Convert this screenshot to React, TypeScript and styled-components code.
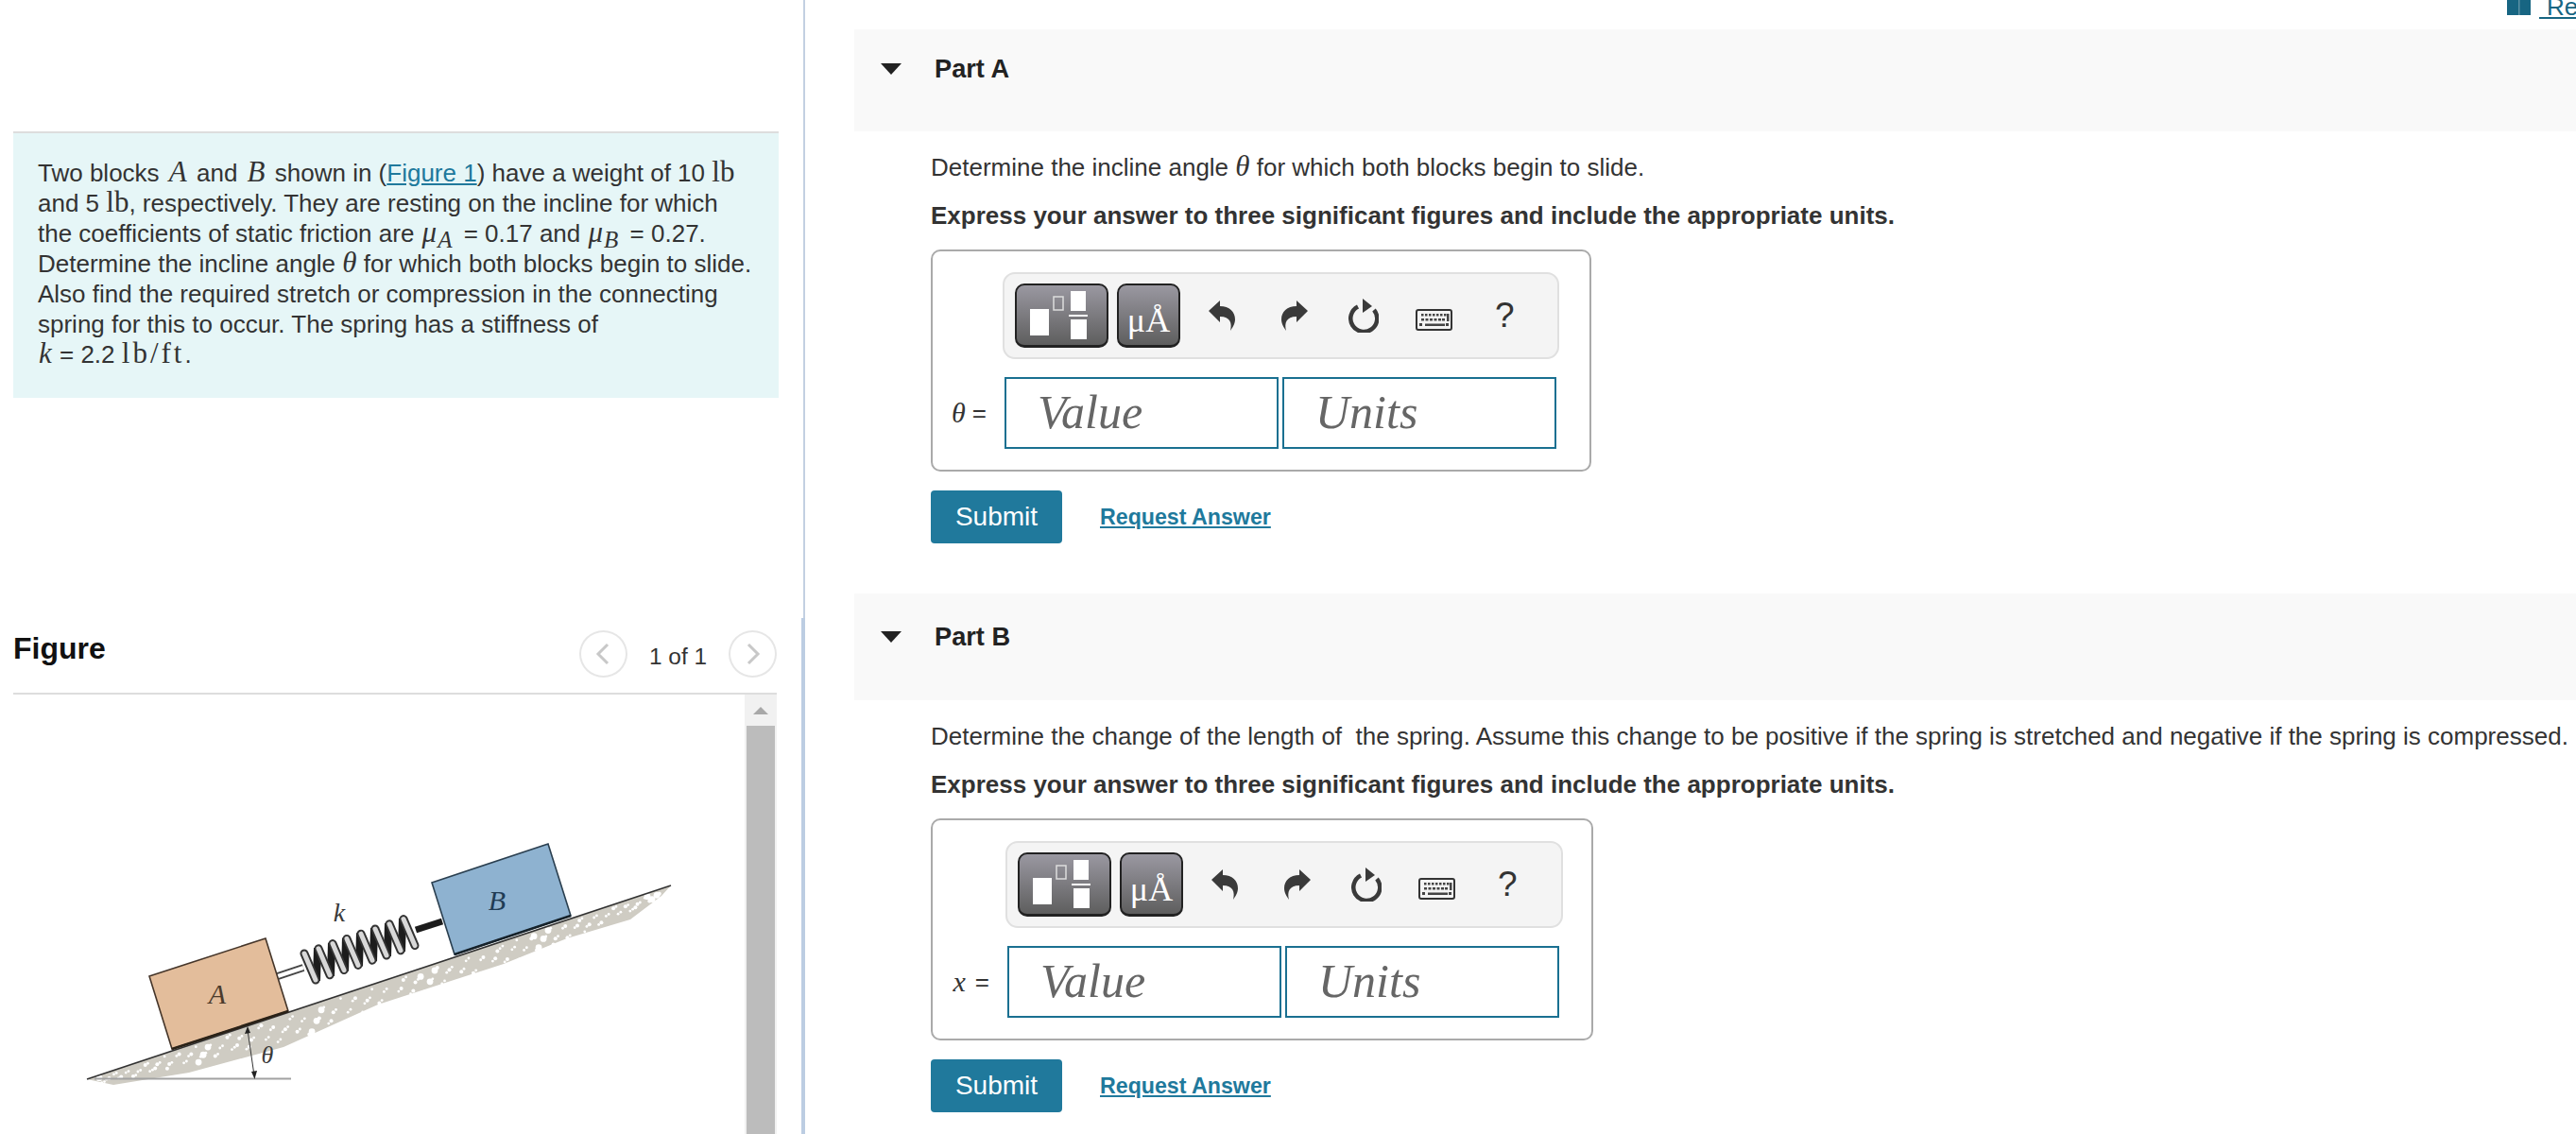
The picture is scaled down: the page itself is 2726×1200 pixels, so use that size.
import type { ReactNode } from "react";
import styled, { createGlobalStyle } from "styled-components";

const teal = "#20799c";
const bodyText = "#333333";

const GlobalStyle = createGlobalStyle`
  html, body {
    margin: 0;
    padding: 0;
    background: #ffffff;
    color: ${bodyText};
    font-family: "Liberation Sans", Arial, sans-serif;
    font-size: 26px;
  }
  * { box-sizing: border-box; }
`;

const Page = styled.div`
  display: flex;
  width: 2726px;
  height: 1200px;
  overflow: hidden;
`;

const LeftColumn = styled.aside`
  width: 848px;
  flex: none;
  padding: 139px 0 0 14px;
`;

const Intro = styled.div`
  width: 810px;
  height: 282px;
  padding: 26px 0 0 26px;
  background: #e6f6f7;
  border-top: 2px solid #dddddd;
`;

const IntroLine = styled.div`
  height: 32px;
  font-size: 26px;
  line-height: 32px;
  white-space: nowrap;
`;

const Link = styled.a`
  color: ${teal};
  text-decoration: underline;
`;

const MathText = styled.span<{ $spread?: number }>`
  font-family: "Liberation Serif", "Times New Roman", serif;
  font-size: 31px;
  line-height: 0;
  letter-spacing: ${(p) => p.$spread ?? 0}px;
`;

const MathVar = styled(MathText)<{ $pad?: number }>`
  font-style: italic;
  margin: 0 ${(p) => p.$pad ?? 0}px;
`;

const MathSub = styled.sub`
  margin-right: 5px;
  font-family: "Liberation Serif", "Times New Roman", serif;
  font-style: italic;
  font-size: 25px;
  line-height: 0;
`;

const FigureHeader = styled.div`
  display: flex;
  justify-content: space-between;
  width: 808px;
  height: 68px;
  margin-top: 246px;
  border-bottom: 2px solid #dddddd;
`;

const FigureTitle = styled.h2`
  margin: 0;
  color: #111111;
  font-size: 32px;
  font-weight: 700;
  line-height: 38px;
`;

const Pager = styled.div`
  display: flex;
  align-items: flex-start;
  gap: 23px;
`;

const PagerCount = styled.span`
  margin-top: 12px;
  font-size: 24.4px;
  line-height: 32px;
`;

const PagerButton = styled.span`
  display: flex;
  align-items: center;
  justify-content: center;
  width: 51px;
  height: 50px;
  border: 2px solid #e6e6e6;
  border-radius: 50%;
`;

const FigureBody = styled.div`
  display: flex;
  width: 808px;
  height: 465px;
`;

const FigureSvg = styled.svg`
  display: block;
  flex: none;
`;

const ScrollBar = styled.div`
  display: flex;
  flex-direction: column;
  width: 34px;
  background: #f1f1f1;
`;

const ScrollArrow = styled.div`
  display: flex;
  align-items: center;
  justify-content: center;
  height: 33px;
  &::before {
    content: "";
    border-left: 8px solid transparent;
    border-right: 8px solid transparent;
    border-bottom: 8px solid #a8a8a8;
  }
`;

const ScrollThumb = styled.div`
  flex: 1;
  margin: 0 2px;
  background: #bcbcbc;
`;

const Divider = styled.div`
  display: flex;
  flex-direction: column;
  align-items: flex-end;
  width: 4px;
  flex: none;
`;

const DividerTop = styled.div`
  width: 2px;
  height: 654px;
  background: #c3d0e2;
`;

const DividerBottom = styled.div`
  width: 4px;
  flex: 1;
  background: #bccde2;
`;

const RightColumn = styled.main`
  position: relative;
  flex: 1;
  min-width: 0;
  padding: 31px 0 0 52px;
`;

const TopLink = styled.div`
  position: absolute;
  top: 0;
  right: 0;
  display: flex;
  align-items: flex-start;
  gap: 9px;
`;

const TopLinkText = styled.a`
  display: block;
  width: 39px;
  height: 20px;
  padding-left: 8px;
  border-bottom: 2px solid #176582;
  color: #176582;
  font-size: 26px;
  line-height: 14px;
  overflow: hidden;
`;

const Section = styled.section<{ $gap: number }>`
  margin-bottom: ${(p) => p.$gap}px;
`;

const PartBar = styled.div<{ $height: number; $top: number }>`
  display: flex;
  align-items: flex-start;
  height: ${(p) => p.$height}px;
  padding: ${(p) => p.$top}px 0 0 28px;
  background: #f9f9f9;
`;

const Caret = styled.span`
  width: 0;
  height: 0;
  margin-top: 10px;
  border-left: 11px solid transparent;
  border-right: 11px solid transparent;
  border-top: 12px solid #222222;
`;

const PartTitle = styled.h3`
  margin: 0 0 0 35px;
  font-size: 27.2px;
  font-weight: 700;
  line-height: 32px;
  color: #222222;
`;

const PartBody = styled.div`
  padding: 22px 0 0 81px;
`;

const Prompt = styled.p`
  height: 32px;
  margin: 0 0 19px;
  font-size: 26px;
  line-height: 32px;
  white-space: pre;
`;

const Instruction = styled(Prompt)`
  margin-bottom: 20px;
  font-weight: 700;
`;

const AnswerBox = styled.div<{ $width: number; $indent: number }>`
  width: ${(p) => p.$width}px;
  height: 235px;
  padding: 22px 0 0 ${(p) => p.$indent}px;
  border: 2px solid #aaaaaa;
  border-radius: 10px;
`;

const Toolbar = styled.div<{ $width: number }>`
  display: flex;
  align-items: center;
  width: ${(p) => p.$width}px;
  height: 92px;
  margin-left: -2px;
  padding-left: 11px;
  background: #f4f4f4;
  border: 2px solid #e0e0e0;
  border-radius: 13px;
`;

const TemplateButton = styled.span<{ $width: number }>`
  display: flex;
  align-items: center;
  justify-content: center;
  width: ${(p) => p.$width}px;
  height: 68px;
  margin-right: 9px;
  background: linear-gradient(#9a98a1, #5e5e5e);
  border: 2px solid #222222;
  border-bottom-width: 3px;
  border-radius: 10px;
`;

const UnitGlyph = styled.span`
  padding-top: 10px;
  color: #ffffff;
  font-family: "Liberation Serif", "Times New Roman", serif;
  font-size: 36px;
  line-height: 40px;
`;

const ToolIcon = styled.svg<{ $left: number; $down?: number }>`
  display: block;
  flex: none;
  margin-left: ${(p) => p.$left}px;
  margin-top: ${(p) => p.$down ?? 0}px;
`;

const HelpMark = styled.span`
  margin-left: 45px;
  font-size: 37px;
  line-height: 40px;
  color: #333333;
`;

const InputRow = styled.div<{ $indent: number }>`
  display: flex;
  align-items: center;
  gap: 4px;
  height: 76px;
  margin: 19px 0 0 -${(p) => p.$indent}px;
`;

const InputLabel = styled.label<{ $width: number; $gap: number }>`
  display: flex;
  justify-content: flex-end;
  align-items: center;
  gap: ${(p) => p.$gap}px;
  width: ${(p) => p.$width}px;
  padding-right: 15px;
  flex: none;
  font-size: 26px;
`;

const LabelVar = styled.span`
  font-family: "Liberation Serif", "Times New Roman", serif;
  font-style: italic;
  font-size: 30px;
`;

const AnswerInput = styled.input`
  width: 290px;
  height: 76px;
  padding: 0 0 2px 33px;
  border: 2px solid #1a7091;
  border-radius: 0;
  background: #ffffff;
  font-family: "Liberation Serif", "Times New Roman", serif;
  font-size: 50px;
  font-style: italic;
  &::placeholder {
    color: #666666;
    opacity: 1;
  }
`;

const Actions = styled.div`
  display: flex;
  align-items: center;
  gap: 40px;
  margin-top: 20px;
`;

const SubmitButton = styled.button`
  width: 139px;
  height: 56px;
  padding: 0;
  background: ${teal};
  border: 0;
  border-radius: 4px;
  color: #ffffff;
  font-family: inherit;
  font-size: 28px;
`;

const RequestLink = styled(Link)`
  font-size: 23.2px;
  font-weight: 700;
`;

function Undo({ flip, left }: { flip?: boolean; left: number }) {
  return (
    <ToolIcon $left={left} width="28" height="32" viewBox="0 0 28 32">
      <path
        transform={flip ? "translate(28 0) scale(-1 1)" : undefined}
        d="M0 11 12 0V6C22 6 28 12 28 20 28 25 25 29 23 32 25 24 23 17 12 17V23Z"
        fill="#3a3a3a"
      />
    </ToolIcon>
  );
}

function Reset({ left }: { left: number }) {
  return (
    <ToolIcon $left={left} width="32" height="36" viewBox="0 0 32 36">
      <path d="M27 12A14 14 0 1 1 10 8.5" fill="none" stroke="#3a3a3a" strokeWidth="4.5" />
      <path d="M15 0 25 8 15 15Z" fill="#3a3a3a" />
    </ToolIcon>
  );
}

function KeyboardIcon({ left }: { left: number }) {
  const top = [6, 10, 14, 18, 22, 26, 30];
  const mid = [6, 10.5, 15, 19.5, 24, 28];
  return (
    <ToolIcon $left={left} $down={9} width="39" height="23" viewBox="0 0 39 23">
      <rect x="1" y="1" width="37" height="21" rx="2" fill="#f4f4f4" stroke="#333333" strokeWidth="2" />
      {top.map((x) => (
        <rect key={x} x={x} y="5" width="2.5" height="2.5" fill="#444444" />
      ))}
      {mid.map((x) => (
        <rect key={x} x={x} y="10" width="3" height="2.5" fill="#444444" />
      ))}
      <rect x="33" y="5" width="2.5" height="8" fill="#444444" />
      <rect x="4" y="15" width="3" height="3" fill="#444444" />
      <rect x="10" y="15.5" width="21" height="2.5" fill="#444444" />
      <rect x="32" y="15" width="3" height="3" fill="#444444" />
    </ToolIcon>
  );
}

function TemplateIcon() {
  return (
    <svg width="95" height="63" viewBox="0 0 95 63">
      <rect x="14" y="25" width="20" height="28" fill="#ffffff" />
      <rect x="39" y="12" width="10" height="14" fill="none" stroke="#dddddd" strokeWidth="1.5" />
      <rect x="57" y="6" width="16" height="21" fill="#ffffff" />
      <rect x="55" y="31" width="20" height="2" fill="#ffffff" />
      <rect x="57" y="36" width="17" height="21" fill="#ffffff" />
    </svg>
  );
}

function Chevron({ right }: { right?: boolean }) {
  return (
    <svg width="16" height="24" viewBox="0 0 16 24">
      <polyline
        points={right ? "3,2 13,12 3,22" : "13,2 3,12 13,22"}
        fill="none"
        stroke="#c8c8c8"
        strokeWidth="3"
      />
    </svg>
  );
}

// fixed speckle for the gravel under the incline
const gravel = Array.from({ length: 190 }, (_, i) => {
  const t = (i * 0.61803) % 1;
  const along = 105 + t * 595;
  const maxDepth = 6 + 24 * Math.sin(Math.PI * t);
  const depth = 3 + ((i * 0.37) % 1) * maxDepth;
  return {
    cx: along,
    cy: 1142 - (along - 92) * 0.3317 + depth,
    r: i % 11 === 0 ? 3.4 : i % 3 === 0 ? 2 : 1.4,
  };
});

const coils = Array.from({ length: 8 }, (_, i) => ({ cx: 328 + i * 15, cy: 1023 - i * 5.2 }));

function InclineFigure() {
  return (
    <FigureSvg width="774" height="465" viewBox="14 735 774 465">
      <defs>
        <filter id="soft">
          <feGaussianBlur stdDeviation="0.6" />
        </filter>
      </defs>
      <g filter="url(#soft)">
        <polygon
          points="92,1142 710,937 700,948 667,973 600,993 533,1020 400,1063 300,1108 200,1135 120,1148"
          fill="#cfccc3"
        />
        {gravel.map((g, i) => (
          <circle key={i} cx={g.cx} cy={g.cy} r={g.r} fill="#ffffff" />
        ))}
        <line x1="92" y1="1142" x2="710" y2="937" stroke="#333333" strokeWidth="1.6" />
        <line x1="100" y1="1141.5" x2="308" y2="1141.5" stroke="#a2a2a2" strokeWidth="2" />
        <line x1="262" y1="1090" x2="269" y2="1138" stroke="#333333" strokeWidth="1" />
        <polygon points="262,1086 259,1094 265,1093" fill="#222222" />
        <polygon points="269.5,1142 266,1134 272,1133" fill="#222222" />

        <line x1="294" y1="1033" x2="321" y2="1024" stroke="#444444" strokeWidth="8" />
        <line x1="294" y1="1033" x2="321" y2="1024" stroke="#ffffff" strokeWidth="4" />
        <line x1="440" y1="984" x2="468" y2="975" stroke="#1c1c1c" strokeWidth="7" />
        {coils.slice(0, -1).map((c, i) => (
          <line key={i} x1={c.cx + 7} y1={c.cy + 15} x2={c.cx + 8} y2={c.cy - 20} stroke="#1c1c1c" strokeWidth="8" />
        ))}
        {coils.map((c, i) => (
          <g key={i}>
            <line x1={c.cx - 6} y1={c.cy - 14} x2={c.cx + 6} y2={c.cy + 14} stroke="#333333" strokeWidth="9" strokeLinecap="round" />
            <line x1={c.cx - 6} y1={c.cy - 14} x2={c.cx + 6} y2={c.cy + 14} stroke="#d8d8d8" strokeWidth="5" strokeLinecap="round" />
          </g>
        ))}

        <polygon points="158,1033 281,993 305,1070 182,1110" fill="#e3bd9b" stroke="#45362a" strokeWidth="1.6" />
        <line x1="182" y1="1110" x2="305" y2="1070" stroke="#2a2018" strokeWidth="2.6" />
        <polygon points="457,934 580,893 604,969 481,1010" fill="#8eb2d0" stroke="#2b3f50" strokeWidth="1.6" />
        <line x1="481" y1="1010" x2="604" y2="969" stroke="#16222c" strokeWidth="2.6" />
      </g>
      <text x="230" y="1062" fontFamily="'Liberation Serif', serif" fontStyle="italic" fontSize="30" fill="#4c3b2c" textAnchor="middle">A</text>
      <text x="526" y="963" fontFamily="'Liberation Serif', serif" fontStyle="italic" fontSize="30" fill="#1f3c55" textAnchor="middle">B</text>
      <text x="359" y="975" fontFamily="'Liberation Serif', serif" fontStyle="italic" fontSize="28" fill="#3a3a3a" textAnchor="middle">k</text>
      <text x="283" y="1125" fontFamily="'Liberation Serif', serif" fontStyle="italic" fontSize="26" fill="#3a3a3a" textAnchor="middle">θ</text>
    </FigureSvg>
  );
}

type PartProps = {
  name: string;
  prompt: ReactNode;
  symbol: string;
  labelGap: number;
  barHeight: number;
  barTop: number;
  boxWidth: number;
  indent: number;
  toolbarWidth: number;
  gap: number;
};

function AnswerPart(p: PartProps) {
  return (
    <Section $gap={p.gap}>
      <PartBar $height={p.barHeight} $top={p.barTop}>
        <Caret />
        <PartTitle>{p.name}</PartTitle>
      </PartBar>
      <PartBody>
        <Prompt>{p.prompt}</Prompt>
        <Instruction>Express your answer to three significant figures and include the appropriate units.</Instruction>
        <AnswerBox $width={p.boxWidth} $indent={p.indent}>
          <Toolbar $width={p.toolbarWidth}>
            <TemplateButton $width={99}>
              <TemplateIcon />
            </TemplateButton>
            <TemplateButton $width={67}>
              <UnitGlyph>μÅ</UnitGlyph>
            </TemplateButton>
            <Undo left={21} />
            <Undo flip left={49} />
            <Reset left={43} />
            <KeyboardIcon left={39} />
            <HelpMark>?</HelpMark>
          </Toolbar>
          <InputRow $indent={p.indent}>
            <InputLabel $width={p.indent - 4} $gap={p.labelGap}>
              <LabelVar>{p.symbol}</LabelVar>=
            </InputLabel>
            <AnswerInput placeholder="Value" readOnly />
            <AnswerInput placeholder="Units" readOnly />
          </InputRow>
        </AnswerBox>
        <Actions>
          <SubmitButton>Submit</SubmitButton>
          <RequestLink href="#">Request Answer</RequestLink>
        </Actions>
      </PartBody>
    </Section>
  );
}

export default function App() {
  return (
    <Page>
      <GlobalStyle />
      <LeftColumn>
        <Intro>
          <IntroLine>
            Two blocks <MathVar $pad={3}>A</MathVar> and <MathVar $pad={3}>B</MathVar> shown in (<Link href="#">Figure 1</Link>) have a weight of 10 <MathText>lb</MathText>
          </IntroLine>
          <IntroLine>
            and 5 <MathText>lb</MathText>, respectively. They are resting on the incline for which
          </IntroLine>
          <IntroLine>
            the coefficients of static friction are <MathVar $pad={1}>μ</MathVar><MathSub>A</MathSub> = 0.17 and <MathVar $pad={1}>μ</MathVar><MathSub>B</MathSub> = 0.27.
          </IntroLine>
          <IntroLine>
            Determine the incline angle <MathVar>θ</MathVar> for which both blocks begin to slide.
          </IntroLine>
          <IntroLine>Also find the required stretch or compression in the connecting</IntroLine>
          <IntroLine>spring for this to occur. The spring has a stiffness of</IntroLine>
          <IntroLine>
            <MathVar $pad={1}>k</MathVar> = 2.2 <MathText $spread={3}>lb/ft</MathText>.
          </IntroLine>
        </Intro>
        <FigureHeader>
          <FigureTitle>Figure</FigureTitle>
          <Pager>
            <PagerButton>
              <Chevron />
            </PagerButton>
            <PagerCount>1 of 1</PagerCount>
            <PagerButton>
              <Chevron right />
            </PagerButton>
          </Pager>
        </FigureHeader>
        <FigureBody>
          <InclineFigure />
          <ScrollBar>
            <ScrollArrow />
            <ScrollThumb />
          </ScrollBar>
        </FigureBody>
      </LeftColumn>
      <Divider>
        <DividerTop />
        <DividerBottom />
      </Divider>
      <RightColumn>
        <TopLink>
          <svg width="25" height="16" viewBox="0 0 25 16">
            <rect width="25" height="16" fill="#176582" />
            <rect x="12" width="1.5" height="16" fill="#5d92a6" />
          </svg>
          <TopLinkText href="#">Re</TopLinkText>
        </TopLink>
        <AnswerPart
          name="Part A"
          prompt={
            <>
              Determine the incline angle <MathVar>θ</MathVar> for which both blocks begin to slide.
            </>
          }
          symbol="θ"
          labelGap={7}
          barHeight={108}
          barTop={26}
          boxWidth={699}
          indent={76}
          toolbarWidth={589}
          gap={53}
        />
        <AnswerPart
          name="Part B"
          prompt="Determine the change of the length of  the spring. Assume this change to be positive if the spring is stretched and negative if the spring is compressed."
          symbol="x"
          labelGap={10}
          barHeight={113}
          barTop={30}
          boxWidth={701}
          indent={79}
          toolbarWidth={590}
          gap={0}
        />
      </RightColumn>
    </Page>
  );
}
